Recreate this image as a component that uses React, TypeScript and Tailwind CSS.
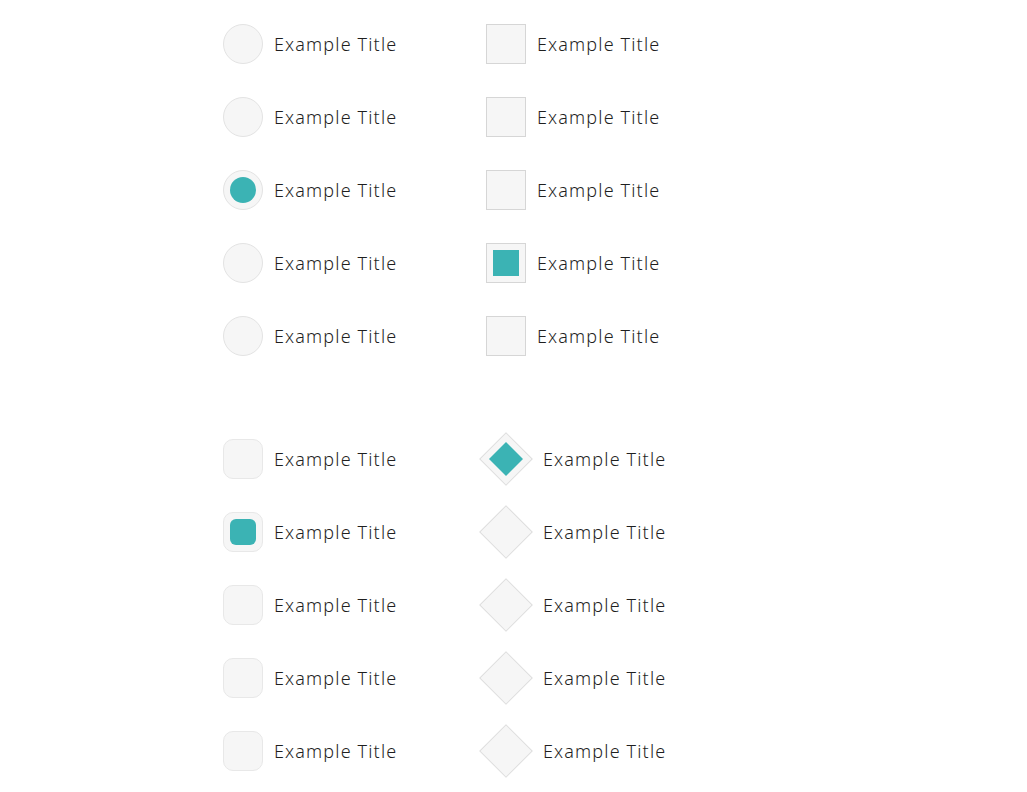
const rows = [0, 1, 2, 3, 4];

function Label() {
  return <span className="text-[18px] font-light text-[#1f1f1f] tracking-[1.15px]">Example Title</span>;
}

function Radio({ checked }: { checked?: boolean }) {
  return (
    <div className="flex items-center gap-[11px] h-10">
      <div className="w-10 h-10 rounded-full bg-[#f6f6f6] border border-[#e3e3e3] flex items-center justify-center">
        {checked && <div className="w-[26px] h-[26px] rounded-full bg-[#3bb3b4]" />}
      </div>
      <Label />
    </div>
  );
}

function Square({ checked }: { checked?: boolean }) {
  return (
    <div className="flex items-center gap-[11px] h-10">
      <div className="w-10 h-10 bg-[#f6f6f6] border border-[#d6d6d6] flex items-center justify-center">
        {checked && <div className="w-[26px] h-[26px] bg-[#3bb3b4]" />}
      </div>
      <Label />
    </div>
  );
}

function Rounded({ checked }: { checked?: boolean }) {
  return (
    <div className="flex items-center gap-[11px] h-10">
      <div className="w-10 h-10 rounded-[10px] bg-[#f6f6f6] border border-[#e8e8e8] flex items-center justify-center">
        {checked && <div className="w-[26px] h-[26px] rounded-[6px] bg-[#3bb3b4]" />}
      </div>
      <Label />
    </div>
  );
}

function Diamond({ checked }: { checked?: boolean }) {
  return (
    <div className="flex items-center gap-[10px] h-10 -ml-[7px]">
      <div className="w-[54px] h-10 flex items-center justify-center">
        <div className="w-[38px] h-[38px] rotate-45 bg-[#f6f6f6] border border-[#dedede] flex items-center justify-center">
          {checked && <div className="w-[24px] h-[24px] bg-[#3bb3b4]" />}
        </div>
      </div>
      <Label />
    </div>
  );
}

export default function App() {
  return (
    <div className="min-h-screen bg-white pt-6 pl-[223px]" style={{ fontFamily: '"Noto Sans", sans-serif' }}>
      <div className="flex">
        <div className="w-[263px] flex flex-col gap-[33px]">
          {rows.map((i) => (
            <Radio key={i} checked={i === 2} />
          ))}
        </div>
        <div className="flex flex-col gap-[33px]">
          {rows.map((i) => (
            <Square key={i} checked={i === 3} />
          ))}
        </div>
      </div>
      <div className="flex mt-[83px]">
        <div className="w-[263px] flex flex-col gap-[33px]">
          {rows.map((i) => (
            <Rounded key={i} checked={i === 1} />
          ))}
        </div>
        <div className="flex flex-col gap-[33px]">
          {rows.map((i) => (
            <Diamond key={i} checked={i === 0} />
          ))}
        </div>
      </div>
    </div>
  );
}
